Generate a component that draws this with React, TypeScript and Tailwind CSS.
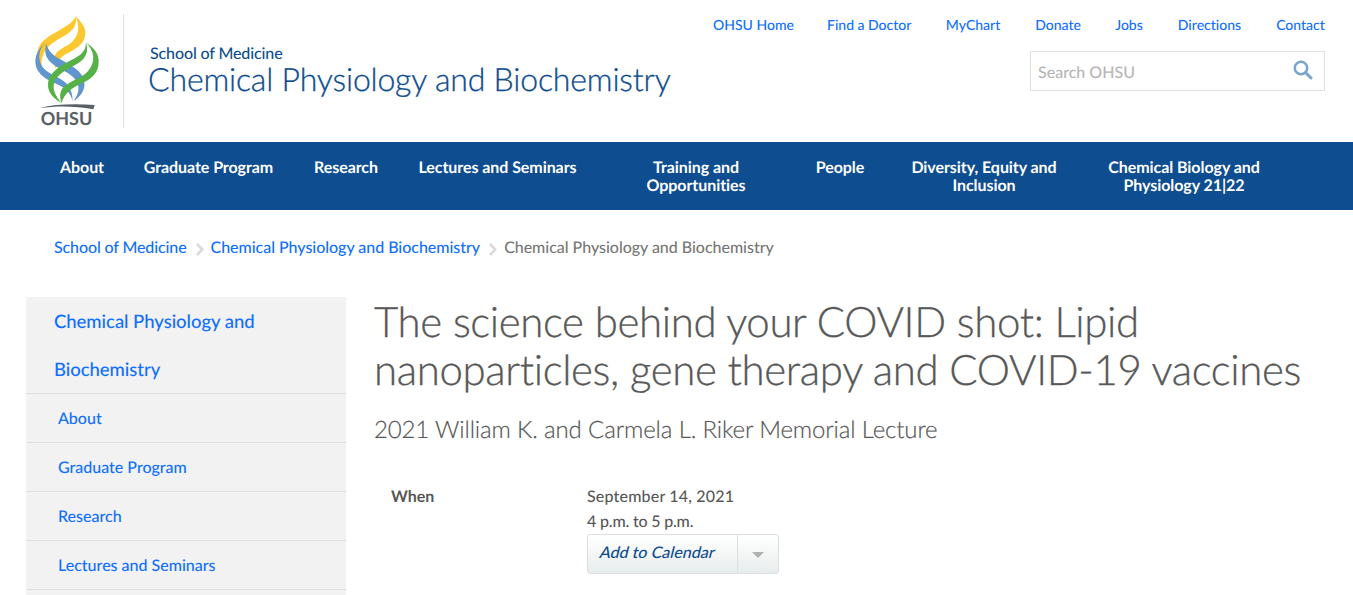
const topLinks = [
  { label: "OHSU Home", width: "w-[80px]" },
  { label: "Find a Doctor", width: "w-[84px]" },
  { label: "MyChart", width: "w-[56px]" },
  { label: "Donate", width: "w-[46px]" },
  { label: "Jobs", width: "w-[28px]" },
  { label: "Directions", width: "w-[65px]" },
  { label: "Contact", width: "w-[49px]" },
]

const navItems = [
  { label: "About", width: "w-[84px]" },
  { label: "Graduate Program", width: "w-[169px]" },
  { label: "Research", width: "w-[106px]" },
  { label: "Lectures and Seminars", width: "w-[197px]" },
  { label: "Training and Opportunities", width: "w-[200px] px-5" },
  { label: "People", width: "w-[88px]" },
  { label: "Diversity, Equity and Inclusion", width: "w-[200px] px-5" },
  { label: "Chemical Biology and Physiology 21|22", width: "w-[200px] px-5" },
]

const sideItems = ["About", "Graduate Program", "Research", "Lectures and Seminars"]

function Logo() {
  return (
    <svg className="h-[130px] w-[103px] shrink-0" viewBox="0 0 309 390">
      <path fill="#fdc82f" d="M167 34 C185 52 197 67 196 85 C195 108 181 126 151 140 C128 151 111 162 108 193 C101 177 100 162 106 148 C113 134 138 126 156 111 C176 93 180 65 167 34Z" />
      <path fill="#fdc82f" d="M167 34 C172 60 160 78 131 94 C97 112 75 128 68 154 C64 169 64 181 67 201 C54 181 47 155 54 132 C62 107 86 94 116 77 C142 62 158 53 167 34Z" />
      <path fill="#5e96cd" d="M78 112 C59 129 56 149 59 166 C64 190 81 202 109 215 C142 231 157 249 158 288 C153 269 144 257 126 245 C101 231 72 224 56 200 C40 176 42 141 78 112Z" />
      <path fill="#5e96cd" d="M79 116 C84 136 96 149 119 162 C153 181 189 199 193 230 C196 254 183 274 160 289 C173 271 178 257 174 240 C169 220 151 207 126 194 C94 177 66 158 79 116Z" />
      <path fill="#56b146" d="M197 112 C222 129 238 146 236 173 C234 204 217 220 187 234 C151 251 133 266 125 294 C117 273 119 253 138 240 C157 226 187 218 205 197 C228 170 224 138 197 112Z" />
      <path fill="#56b146" d="M198 113 C208 143 195 164 164 181 C127 200 104 217 101 239 C99 257 108 275 125 294 C99 279 84 263 84 239 C84 211 105 192 139 173 C174 154 198 145 198 113Z" />
      <path fill="#5a6067" d="M59 309 C105 297 164 296 224 300 L220 313 C164 302 111 302 59 309Z" />
      <text x="62" y="361" fill="#5a6067" fontFamily="Lato" fontWeight="700" fontSize="54" textLength="155" lengthAdjust="spacingAndGlyphs">OHSU</text>
    </svg>
  )
}

function Crumb() {
  return (
    <svg className="mr-[7px] ml-[9px] mt-[7px] h-[13px] w-[8px] shrink-0" viewBox="0 0 8 13" fill="none" stroke="#dadada" strokeWidth="2.6">
      <path d="M1 1 6.3 6.5 1 12" />
    </svg>
  )
}

export default function App() {
  return (
    <div className="h-[595px] w-[1353px] overflow-hidden bg-white font-['Lato',sans-serif] text-base font-medium text-[#585858] [font-variant-ligatures:none] [text-rendering:geometricPrecision]">
      <header className="flex h-[142px] pr-[28px] pl-5">
        <div className="pt-[5px]">
          <Logo />
        </div>
        <div className="mt-[14px] h-[114px] w-px bg-[#e0e0e0]" />
        <div className="pt-[44px] pl-[24px] text-[#0e4d8f]">
          <p className="pl-[2px] text-base leading-5 tracking-[-0.12px] whitespace-nowrap">School of Medicine</p>
          <p className="-mt-px text-[32px] leading-8 font-light tracking-[-0.17px] whitespace-nowrap [-webkit-text-stroke:0.3px]">Chemical Physiology and Biochemistry</p>
        </div>
        <div className="ml-auto flex flex-col items-end">
          <ul className="flex gap-[34px] pt-[15px] text-sm leading-5 text-[#0f6fff]">
            {topLinks.map((link) => (
              <li key={link.label} className={`${link.width} text-center whitespace-nowrap`}>{link.label}</li>
            ))}
          </ul>
          <div className="mt-4 flex h-10 w-[295px] items-center justify-between border border-[#e0e0e0] pr-[11px] pl-[7px]">
            <span className="pt-[3px] text-base text-[#b5b5b5]">Search OHSU</span>
            <svg className="mb-[2px] h-5 w-5" viewBox="0 0 20 20" fill="none" stroke="#77a5cf">
              <circle cx="8" cy="8" r="6.2" strokeWidth="2.5" />
              <path d="M12.5 12.5 18 18" strokeWidth="3" strokeLinecap="round" />
            </svg>
          </div>
        </div>
      </header>

      <nav className="flex h-[68px] bg-[#0e4d8f] pt-[17px] pl-[40px] text-center leading-[18px] font-bold tracking-[-0.06px] text-white">
        {navItems.map((item) => (
          <a key={item.label} className={`${item.width} shrink-0`}>{item.label}</a>
        ))}
      </nav>

      <div className="flex h-[87px] pt-[26px] pl-[54px] leading-6 whitespace-nowrap">
        <a className="tracking-[-0.12px] text-[#0f6fff]">School of Medicine</a>
        <Crumb />
        <a className="tracking-[-0.03px] text-[#0f6fff]">Chemical Physiology and Biochemistry</a>
        <Crumb />
        <span className="tracking-[-0.03px] text-[#777]">Chemical Physiology and Biochemistry</span>
      </div>

      <div className="flex pl-[26px]">
        <aside className="h-[298px] w-[320px] shrink-0 overflow-hidden bg-[#f2f2f2] text-[#0f6fff]">
          <h2 className="h-[97px] w-full border-b border-[#e0e0e0] pr-16 pl-[28px] text-[18.5px] leading-[48px] tracking-[-0.04px]">
            Chemical Physiology and Biochemistry
          </h2>
          {sideItems.map((item) => (
            <div key={item} className="h-[49px] border-b border-[#e0e0e0] pt-px pl-8 leading-[48px]">{item}</div>
          ))}
        </aside>

        <main className="pl-[28px]">
          <h1 className="w-[960px] text-[42px] leading-[48px] font-light tracking-[-0.37px] whitespace-nowrap [-webkit-text-stroke:0.3px]">
            The science behind your COVID shot: Lipid
            <br />
            nanoparticles, gene therapy and COVID-19 vaccines
          </h1>
          <h2 className="mt-[21px] text-2xl leading-8 font-light tracking-[-0.13px] [-webkit-text-stroke:0.2px]">2021 William K. and Carmela L. Riker Memorial Lecture</h2>
          <div className="mt-[38px] flex pl-[17px] leading-[25px]">
            <div className="w-[196px] font-bold">When</div>
            <div>
              <p className="tracking-[0.18px]">September 14, 2021</p>
              <p className="tracking-[-0.18px]">4 p.m. to 5 p.m.</p>
              <div className="flex h-10 w-[192px] rounded-[3px] border border-[#dcdfdf] bg-linear-to-b from-white to-[#e9ecec]">
                <span className="w-[149px] shrink-0 pl-[12px] leading-[35px] text-[#0e4d8f]">
                  <span className="inline-block -skew-x-[14deg] tracking-[0.05px] whitespace-nowrap">Add to Calendar</span>
                </span>
                <span className="flex flex-1 items-center justify-center border-l border-[#dcdfdf]">
                  <svg className="mt-[2px] h-[6px] w-3" viewBox="0 0 12 6">
                    <path d="M0 0h12L6 6Z" fill="#b0b0b0" />
                  </svg>
                </span>
              </div>
            </div>
          </div>
        </main>
      </div>
    </div>
  )
}
